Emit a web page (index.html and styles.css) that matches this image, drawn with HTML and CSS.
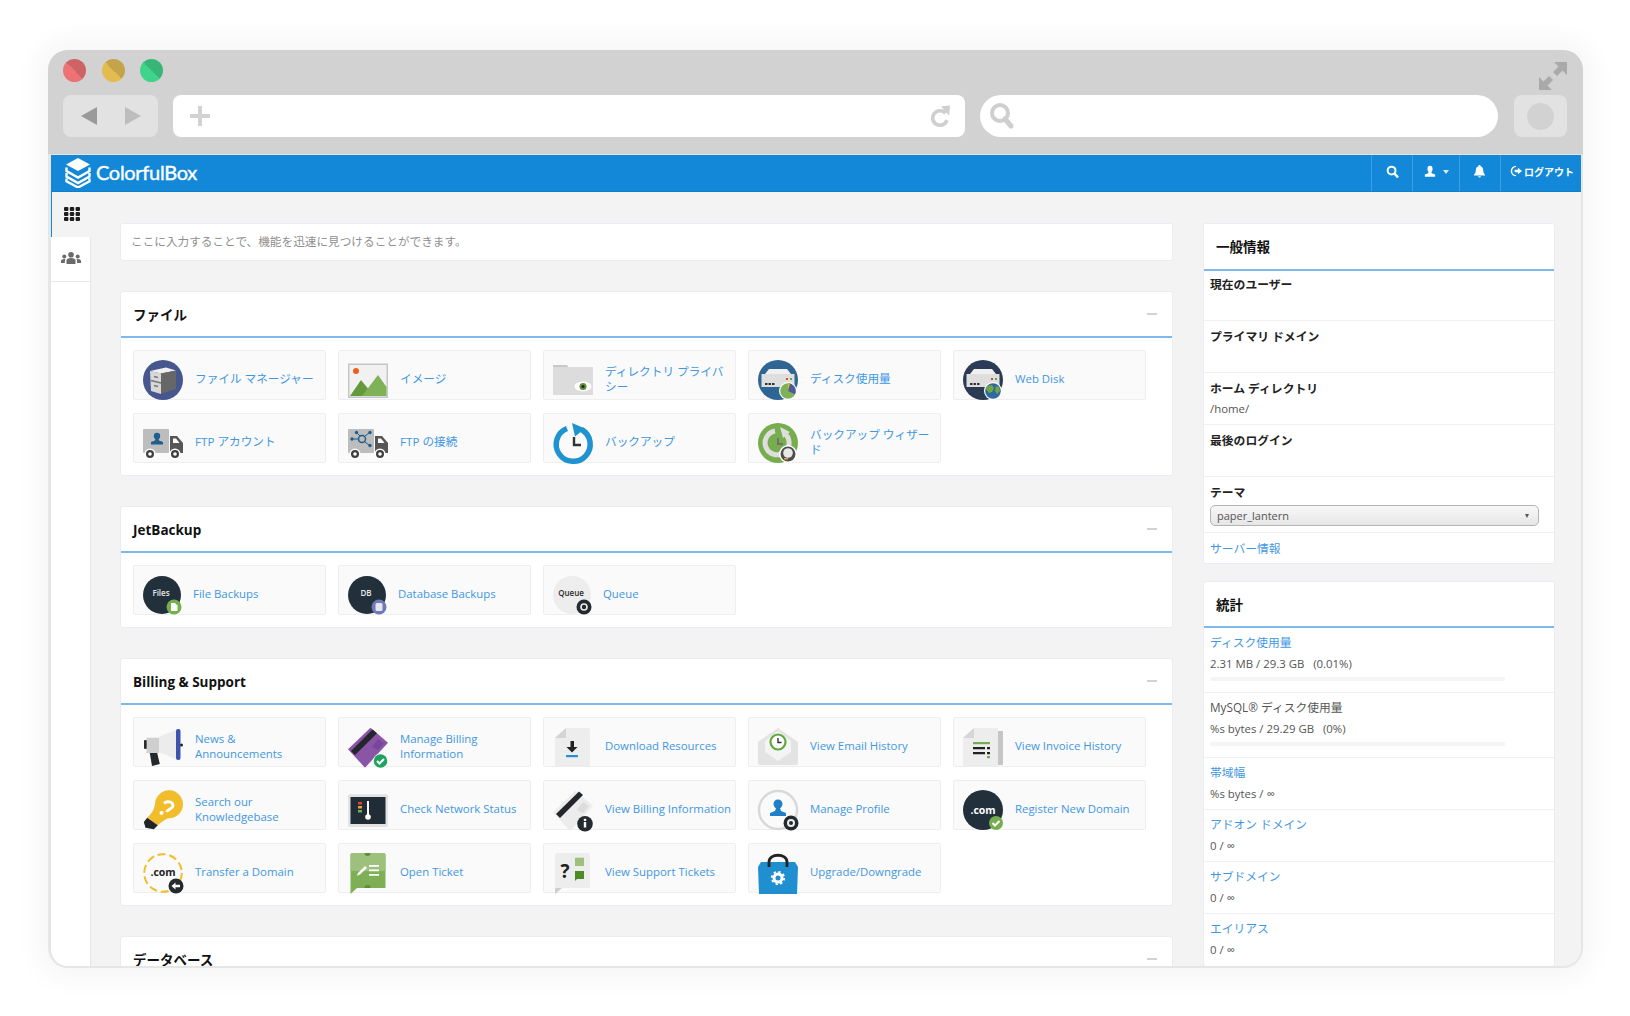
FILE: index.html
```html
<!DOCTYPE html>
<html lang="ja">
<head>
<meta charset="utf-8">
<title>ColorfulBox</title>
<link rel="stylesheet" href="styles.css">
</head>
<body>
<div class="window">
  <div class="chrome">
    <div class="chrome-top">
      <div class="lights"><span class="light red"></span><span class="light yellow"></span><span class="light green"></span></div>
      <svg class="expand" viewBox="0 0 28 28"><path fill="#a9a9a9" d="M28 0v13l-4.500-4.500-5.500 5.500-4-4 5.500-5.500L15 0zM0 28V15l4.500 4.500 5.500-5.500 4 4-5.500 5.500L13 28z"/></svg>
    </div>
    <div class="toolbar">
      <div class="navbox">
        <svg class="nav-arrow" viewBox="0 0 16 18"><path fill="#9a9a9a" d="M16 0v18L0 9z"/></svg>
        <svg class="nav-arrow" viewBox="0 0 16 18"><path fill="#bdbdbd" d="M0 0v18l16-9z"/></svg>
      </div>
      <div class="urlbar">
        <svg class="plus" viewBox="0 0 20 20"><path fill="#d2d2d2" d="M8 0h4v8h8v4h-8v8H8v-8H0V8h8z"/></svg>
        <svg class="reload" viewBox="0 0 22 24"><path fill="none" stroke="#cfcfcf" stroke-width="4" d="M16 8.500a8 8 0 1 0 1.500 7.500"/><path fill="#cfcfcf" d="M11 1l10-1-1 11z"/></svg>
      </div>
      <div class="searchbar">
        <svg class="magnify" viewBox="0 0 24 26"><circle cx="10" cy="10" r="8" fill="none" stroke="#cfcfcf" stroke-width="4"/><path stroke="#cfcfcf" stroke-width="5" stroke-linecap="round" d="M15 16l6 7"/></svg>
      </div>
      <div class="profilebox"><span class="profile-dot"></span></div>
    </div>
  </div>

  <div class="app">
    <header class="appbar">
      <div class="brand">
        <svg class="brand-mark" viewBox="0 0 26 30">
          <path fill="#fff" d="M13 0l12 6.500L13 13 1 6.500z"/>
          <path fill="none" stroke="#fff" stroke-width="2.400" d="M1.500 9.500v3.500L13 19.500 24.500 13V9.500M1.500 15v3.500L13 25 24.500 18.500V15M1.500 20.500v2.800L13 29.500l11.500-6.200v-2.800"/>
        </svg>
        <span class="brand-name">ColorfulBox</span>
      </div>
      <nav class="appnav">
        <a class="navcell cell-search"><svg class="navicon" viewBox="0 0 14 14"><circle cx="6" cy="6" r="4.200" fill="none" stroke="#fff" stroke-width="2.200"/><path stroke="#fff" stroke-width="2.600" d="M9 9l4 4.500"/></svg></a>
        <a class="navcell cell-user"><svg class="navicon user-glyph" viewBox="0 0 14 14"><ellipse cx="7" cy="4" rx="3" ry="3.600" fill="#fff"/><path fill="#fff" d="M5.500 6.500h3l.5 2.500 4 1.500V13H1v-2.500L5 9z"/></svg><span class="caret"></span></a>
        <a class="navcell cell-bell"><svg class="navicon" viewBox="0 0 14 14"><path fill="#fff" d="M7 0a1.200 1.200 0 0 1 1.200 1.300C10.500 2 11 4 11 6c0 2.500 1 3.500 2 4.500v.8H1v-.8c1-1 2-2 2-4.500 0-2 .5-4 2.800-4.700A1.200 1.200 0 0 1 7 0zM5.500 12h3a1.500 1.500 0 0 1-3 0z"/></svg></a>
        <a class="navcell cell-logout"><svg class="logout-icon" viewBox="0 0 13 13"><path fill="none" stroke="#fff" stroke-width="1.600" d="M6 1.500a5 5 0 1 0 0 10"/><path fill="#fff" d="M4.500 5.200h3.500V3L12.500 6.500 8 10V7.800H4.500z"/></svg>ログアウト</a>
      </nav>
    </header>

    <div class="workspace">
      <aside class="sidebar">
        <div class="tab tab-active">
          <svg class="grid-icon" viewBox="0 0 16 14"><g fill="#1d1d1d"><rect x="0" y="0" width="4.400" height="4" rx="1"/><rect x="5.800" y="0" width="4.400" height="4" rx="1"/><rect x="11.600" y="0" width="4.400" height="4" rx="1"/><rect x="0" y="5" width="4.400" height="4" rx="1"/><rect x="5.800" y="5" width="4.400" height="4" rx="1"/><rect x="11.600" y="5" width="4.400" height="4" rx="1"/><rect x="0" y="10" width="4.400" height="4" rx="1"/><rect x="5.800" y="10" width="4.400" height="4" rx="1"/><rect x="11.600" y="10" width="4.400" height="4" rx="1"/></g></svg>
        </div>
        <div class="tab tab-users">
          <svg class="users-icon" viewBox="0 0 20 12"><g fill="#6b6b6b"><circle cx="10" cy="2.800" r="2.800"/><path d="M5.500 12V8.500C5.500 7 7 6 10 6s4.500 1 4.500 2.500V12z"/><circle cx="3.300" cy="4.500" r="2"/><path d="M0 11V9c0-1.300 1.300-2 3.300-2 .5 0 .9 0 1.300.1-.5.500-.7 1-.7 1.500V11z"/><circle cx="16.700" cy="4.500" r="2"/><path d="M20 11V9c0-1.300-1.300-2-3.300-2-.5 0-.9 0-1.300.1.500.500.700 1 .700 1.500V11z"/></g></svg>
        </div>
      </aside>

      <main class="content">
        <div class="left-col">
          <div class="quickfind">ここに入力することで、機能を迅速に見つけることができます。</div>

          <section class="panel">
            <div class="panel-head"><h2>ファイル</h2><span class="collapse"></span></div>
            <div class="items">
              <a class="item"><svg class="ico" viewBox="0 0 40 40"><circle cx="20" cy="20" r="20" fill="#46578f"/><path fill="#f0f0f0" d="M7 11l16-3.500 10 3-15 3z"/><path fill="#d8d8d8" d="M7 11l11 2.500V34L8 31z"/><path fill="#676767" d="M18 13.500l15-3V29l-15 5z"/><path fill="none" stroke="#777" stroke-width="1.300" d="M8 20.500l10 2.500M11 16.500l4 1M11 25.500l4 1"/></svg><span class="label ja">ファイル マネージャー</span></a>

              <a class="item"><svg class="ico" viewBox="0 0 40 40"><rect y="3.500" width="40" height="34.500" fill="#c6c6c6"/><rect x="1.500" y="5" width="37" height="31.500" fill="#f1f1f1"/><circle cx="8" cy="11" r="3" fill="#ee5f1e"/><path fill="#659a3c" d="M2 36l11-16 9 11 4 5z"/><path fill="#7fb256" d="M14 36l16-21 8.500 12v9z"/></svg><span class="label ja">イメージ</span></a>

              <a class="item"><svg class="ico" viewBox="0 0 40 40"><path fill="#c9c9c9" d="M0 5h14l2 3h-16z"/><rect y="7" width="40" height="28" fill="#dcdcdc"/><ellipse cx="30" cy="26.500" rx="8.500" ry="5" fill="#fff"/><circle cx="30" cy="26.500" r="3.500" fill="#5f8f3a"/><circle cx="30" cy="26.500" r="1.500" fill="#222"/></svg><span class="label ja">ディレクトリ プライバシー</span></a>

              <a class="item"><svg class="ico" viewBox="0 0 40 40"><circle cx="20" cy="20" r="20" fill="#2f6592"/><path fill="#f0f0f0" d="M7 14l4-5h18l4 5z"/><path fill="#dedede" d="M3.500 14h33v13h-33z"/><path fill="#333" d="M7 23h2.500v2H7zM10.500 23H13v2h-2.500zM14 23h2.500v2H14z"/><path fill="#d9472f" d="M28 18h2v2h-2z"/><path fill="#5fa83c" d="M32 18h2v2h-2z"/><circle cx="30" cy="31" r="9" fill="#fff"/><circle cx="30" cy="31" r="7.800" fill="#7fb256"/><path fill="#4a5a9c" d="M30 23.200a7.800 7.800 0 0 1 7 11L30 31z"/><path fill="#f2b61e" d="M30 23.200a7.800 7.800 0 0 1 2 .3L30 31z"/></svg><span class="label ja">ディスク使用量</span></a>

              <a class="item"><svg class="ico" viewBox="0 0 40 40"><circle cx="20" cy="20" r="20" fill="#2b3a55"/><path fill="#f0f0f0" d="M7 14l4-5h18l4 5z"/><path fill="#dedede" d="M3.500 14h33v13h-33z"/><path fill="#333" d="M7 23h2.500v2H7zM10.500 23H13v2h-2.500zM14 23h2.500v2H14z"/><path fill="#d9472f" d="M28 18h2v2h-2z"/><path fill="#5fa83c" d="M32 18h2v2h-2z"/><circle cx="30" cy="31" r="9" fill="#fff"/><circle cx="30" cy="31" r="7.800" fill="#2f6a9e"/><path fill="#6fa843" d="M24 26l5-1 2 3-2 4-3 1-3-4zM33 26l3 1 1 4-3 3-2-3z"/></svg><span class="label">Web Disk</span></a>

              <a class="item"><svg class="ico" viewBox="0 0 40 40"><rect y="6" width="26" height="24" rx="1" fill="#bdbdbd"/><path fill="#565656" d="M27 13h7l6 7v10H27z"/><path fill="#fff" d="M30 15.500h3l3.500 4.500H30z"/><circle cx="7" cy="31" r="5.500" fill="#fff"/><circle cx="7" cy="31" r="4" fill="#3f3f3f"/><circle cx="7" cy="31" r="1.800" fill="#fff"/><circle cx="32" cy="31" r="5.500" fill="#fff"/><circle cx="32" cy="31" r="4" fill="#3f3f3f"/><circle cx="32" cy="31" r="1.800" fill="#fff"/><circle cx="14" cy="13" r="3.200" fill="#1f5e8e"/><path fill="#1f5e8e" d="M12.500 15.500h3l.5 2 4 1.500v2.500H8V19l4-1.500z"/></svg><span class="label ja">FTP アカウント</span></a>

              <a class="item"><svg class="ico" viewBox="0 0 40 40"><rect y="6" width="26" height="24" rx="1" fill="#bdbdbd"/><path fill="#565656" d="M27 13h7l6 7v10H27z"/><path fill="#fff" d="M30 15.500h3l3.500 4.500H30z"/><circle cx="7" cy="31" r="5.500" fill="#fff"/><circle cx="7" cy="31" r="4" fill="#3f3f3f"/><circle cx="7" cy="31" r="1.800" fill="#fff"/><circle cx="32" cy="31" r="5.500" fill="#fff"/><circle cx="32" cy="31" r="4" fill="#3f3f3f"/><circle cx="32" cy="31" r="1.800" fill="#fff"/><circle cx="14" cy="16" r="3.500" fill="none" stroke="#1f5e8e" stroke-width="1.500"/><path stroke="#1f5e8e" stroke-width="1" d="M5 16h5M17 13l4-3M17 19l4 3M12 13l-3-3"/><g fill="#1f5e8e"><circle cx="4" cy="16" r="1.700"/><circle cx="22" cy="9.500" r="1.700"/><circle cx="22" cy="22.500" r="1.700"/><circle cx="8.500" cy="9.500" r="1.700"/></g></svg><span class="label ja">FTP の接続</span></a>

              <a class="item"><svg class="ico" viewBox="0 0 40 40"><path fill="none" stroke="#1f93cf" stroke-width="5.500" d="M28.500 6.500A17 17 0 1 1 14 5.500"/><path fill="#1f93cf" d="M19 0l13 5.500-10 8z"/><path fill="none" stroke="#333" stroke-width="2.400" d="M21 14v8h7"/></svg><span class="label ja">バックアップ</span></a>

              <a class="item"><svg class="ico" viewBox="0 0 40 40"><circle cx="20" cy="20" r="20" fill="#78ad4f"/><path fill="none" stroke="#dedede" stroke-width="5" d="M26 10A12 12 0 1 1 17 8"/><path fill="#dedede" d="M22 4l10 5-7 6z"/><path fill="none" stroke="#6f6f6f" stroke-width="1.800" d="M20 15v6h5"/><circle cx="30" cy="31" r="9" fill="#fff"/><circle cx="30" cy="31" r="7.500" fill="#4e4e4e"/><circle cx="30" cy="30" r="4.800" fill="#e8e8e8"/><path fill="#e9a13b" d="M26 35h4v1.500h-4z"/></svg><span class="label ja">バックアップ ウィザード</span></a>
            </div>
          </section>

          <section class="panel">
            <div class="panel-head"><h2 class="head-latin">JetBackup</h2><span class="collapse"></span></div>
            <div class="items">
              <a class="item item-jb"><svg class="ico-jb" viewBox="0 0 39 40"><circle cx="19" cy="20" r="19" fill="#22303c"/><text x="18" y="21" class="ico-txt" fill="#e8e8e8">Files</text><circle cx="31" cy="32" r="7.500" fill="#74b04c"/><path fill="#fff" d="M28 28h4l2.500 2.500V36H28z"/></svg><span class="label">File Backups</span></a>
              <a class="item item-jb"><svg class="ico-jb" viewBox="0 0 39 40"><circle cx="19" cy="20" r="19" fill="#22303c"/><text x="18" y="21" class="ico-txt" fill="#e8e8e8">DB</text><circle cx="31" cy="32" r="7.500" fill="#6f7ab6"/><rect x="27.500" y="28" width="7" height="8" rx="1.500" fill="#e6e6f2"/></svg><span class="label">Database Backups</span></a>
              <a class="item item-jb"><svg class="ico-jb" viewBox="0 0 39 40"><circle cx="19" cy="20" r="19" fill="#ededed"/><text x="18" y="21" class="ico-txt" fill="#2b2b2b">Queue</text><circle cx="31" cy="32" r="7.500" fill="#232a30"/><circle cx="31" cy="32" r="3" fill="none" stroke="#eee" stroke-width="1.600"/></svg><span class="label">Queue</span></a>
            </div>
          </section>

          <section class="panel">
            <div class="panel-head"><h2 class="head-latin">Billing &amp; Support</h2><span class="collapse"></span></div>
            <div class="items">
              <a class="item"><svg class="ico" viewBox="0 0 40 40"><path fill="#ececec" d="M15.800 9.700L33 3v29l-17.200-7z"/><rect x="3.500" y="10.700" width="12.500" height="15.300" fill="#cfcfcf"/><rect x="1" y="13" width="2.700" height="9" rx="1" fill="#2a2a2a"/><path fill="#23282c" d="M6.800 26h7.400l2.600 11-7.800 2z"/><rect x="33" y="2" width="4.500" height="31" rx="2" fill="#3d53ac"/><circle cx="38.500" cy="18" r="1.500" fill="#222"/></svg><span class="label">News &amp; Announcements</span></a>

              <a class="item"><svg class="ico" viewBox="0 0 40 40"><path fill="#8b55a7" d="M22.500.7L40 15.700 17 40.700 0 22.300z"/><path fill="#23262a" d="M3 24L24.500 2.500 29 6.300 7 28z"/><path fill="#79479a" d="M24 20l6-8 6 4-6 7z"/><circle cx="32.500" cy="34" r="7.500" fill="#fff"/><circle cx="32.500" cy="34" r="6.800" fill="#1fa35f"/><path fill="none" stroke="#fff" stroke-width="2" d="M29 34l2.500 2.500 4.500-4.500"/></svg><span class="label">Manage Billing Information</span></a>

              <a class="item"><svg class="ico" viewBox="0 0 40 40"><path fill="#ededed" d="M2 11L13 1h22a2 2 0 0 1 2 2v37H2z"/><path fill="#d4d4d4" d="M2 11L13 1v10z"/><path fill="#222" d="M17.500 14h3.500v6h3.500L19 25.500 13.500 20H17.500z"/><rect x="13" y="28" width="12" height="2.200" fill="#1f93d8"/></svg><span class="label">Download Resources</span></a>

              <a class="item"><svg class="ico" viewBox="0 0 40 40"><path fill="#e3e3e3" d="M0 15L20 1l20 14v21a2 2 0 0 1-2 2H2a2 2 0 0 1-2-2z"/><path fill="#f4f4f4" d="M7 14L20 4l13 10v11l-13 9-13-9z"/><circle cx="20" cy="15" r="7.500" fill="#fff" stroke="#5fa83c" stroke-width="2.200"/><path fill="none" stroke="#333" stroke-width="1.400" d="M20 11v4.500h3.500"/></svg><span class="label">View Email History</span></a>

              <a class="item"><svg class="ico" viewBox="0 0 40 40"><rect x="35" y="4" width="5" height="34" fill="#c6c6c6"/><path fill="#ededed" d="M0 11L11 1h24v39H0z"/><path fill="#d6d6d6" d="M0 11L11 1v10z"/><rect x="10" y="15" width="17" height="2.200" fill="#78ad4f"/><path fill="#222" d="M10 20h12v2.300H10zM10 25h12v2.300H10zM24 20h3v2.300h-3zM24 25h3v2.300h-3z"/><rect x="24" y="29" width="3" height="2.200" fill="#78ad4f"/></svg><span class="label">View Invoice History</span></a>

              <a class="item"><svg class="ico" viewBox="0 0 40 40"><path fill="#f2bd2b" d="M4.200 27.700C9 23 11 20 12 14A14 14 0 1 1 25 28.300C22 30 18 32 14.800 35.300z"/><path fill="#1f2529" d="M4.200 27.700l10.600 7.600-4 4-8.300-1.600L.8 32z"/><path fill="none" stroke="#fff" stroke-width="2.800" d="M21 13.500c3-3 9-2 9 2 0 3.500-5 3-6.500 6.500"/><circle cx="18.500" cy="23" r="2" fill="#fff"/></svg><span class="label">Search our Knowledgebase</span></a>

              <a class="item"><svg class="ico" viewBox="0 0 40 40"><rect y="4.300" width="40" height="32.700" rx="2" fill="#e2e2e2"/><rect x="2.500" y="7" width="35" height="27" fill="#202c36"/><rect x="10" y="12" width="4" height="2.500" fill="#d9472f"/><rect x="10" y="16" width="4" height="2.500" fill="#e9a13b"/><rect x="10" y="20" width="4" height="2.500" fill="#78ad4f"/><rect x="19" y="11" width="2" height="15" fill="#fff"/><circle cx="20" cy="27" r="2.800" fill="#fff"/></svg><span class="label">Check Network Status</span></a>

              <a class="item"><svg class="ico" viewBox="0 0 40 40"><path fill="#ececec" d="M22.500.7L40 15.700 17 40.700 0 22.300z"/><path fill="#23262a" d="M3 24L26 1.500 30 5 7 28z"/><path fill="#dcdcdc" d="M24 20l6-8 6 4-6 7z"/><circle cx="32" cy="33.700" r="7.800" fill="#232a30"/><rect x="30.800" y="32" width="2.400" height="5.500" fill="#fff"/><rect x="30.800" y="28.800" width="2.400" height="2.200" fill="#fff"/></svg><span class="label">View Billing Information</span></a>

              <a class="item"><svg class="ico" viewBox="0 0 40 40"><circle cx="20" cy="20" r="19" fill="none" stroke="#d8d8d8" stroke-width="2.400"/><circle cx="20" cy="14" r="4.500" fill="#1f80c8"/><path fill="#1f80c8" d="M18 18h4l1 3 5 2v3H12v-3l5-2z"/><circle cx="33" cy="33" r="7.500" fill="#232a30"/><circle cx="33" cy="33" r="3" fill="none" stroke="#eee" stroke-width="2"/></svg><span class="label">Manage Profile</span></a>

              <a class="item"><svg class="ico" viewBox="0 0 40 40"><circle cx="20" cy="20" r="20" fill="#22303c"/><text x="20" y="23.500" class="ico-com" fill="#fff">.com</text><circle cx="33" cy="33" r="7" fill="#78ad4f"/><path fill="none" stroke="#fff" stroke-width="2" d="M29.500 33l2.500 2.500 4.500-4.500"/></svg><span class="label">Register New Domain</span></a>

              <a class="item"><svg class="ico" viewBox="0 0 40 40"><circle cx="20" cy="20" r="18.800" fill="none" stroke="#f0bd2d" stroke-width="2" stroke-dasharray="8 3.800"/><text x="20" y="23" class="ico-com" fill="#222">.com</text><circle cx="33" cy="33" r="7.500" fill="#232a30"/><path fill="#fff" d="M28.500 33l4-3.500v2.300H37v2.400h-4.500v2.300z"/></svg><span class="label">Transfer a Domain</span></a>

              <a class="item"><svg class="ico" viewBox="0 0 40 40"><path fill="#7eaf57" d="M2.500 2a2 2 0 0 1 2-2h31a2 2 0 0 1 2 2v33H9l-6.500 6z"/><path fill="#9dc17d" d="M4.500 0h31a2 2 0 0 1 2 2v16h-35V2a2 2 0 0 1 2-2z"/><path fill="#5d8f38" d="M16.500 0h6a3 3 0 0 1-6 0zM16.500 35h6a3 3 0 0 0-6 0z"/><path fill="#fff" d="M10 20l7-7 2 2-7 6.500-3 1.300z"/><path fill="#fff" d="M21 12h10v1.800H21zM21 16.500h10v1.800H21zM21 21h10v1.800H21z"/></svg><span class="label">Open Ticket</span></a>

              <a class="item"><svg class="ico" viewBox="0 0 40 40"><path fill="#ededed" d="M2 2a2 2 0 0 1 2-2h31a2 2 0 0 1 2 2v33H9l-7 6z"/><path fill="#cfcfcf" d="M2 41l7-6H2z"/><text x="12" y="25" class="ico-q" fill="#222">?</text><path fill="#9dc17d" d="M22 4.700h9V13h-9z"/><path fill="#4d8a28" d="M22 18h9v8h-7l-2 2z"/></svg><span class="label">View Support Tickets</span></a>

              <a class="item"><svg class="ico" viewBox="0 0 40 40"><path fill="#1f8fd0" d="M3 9h34l3 5-1 27H1L0 14z"/><path fill="none" stroke="#222" stroke-width="2.800" d="M11 14V9c0-9 18-9 18 0v5"/><circle cx="20" cy="25" r="4" fill="none" stroke="#fff" stroke-width="3"/><circle cx="20" cy="25" r="6.200" fill="none" stroke="#fff" stroke-width="1.800" stroke-dasharray="2.400 2.400"/></svg><span class="label">Upgrade/Downgrade</span></a>
            </div>
          </section>

          <section class="panel">
            <div class="panel-head"><h2>データベース</h2><span class="collapse"></span></div>
          </section>
        </div>

        <div class="right-col">
          <section class="panel side-panel">
            <div class="side-head side-head-first"><h2>一般情報</h2></div>
            <div class="row"><h3>現在のユーザー</h3></div>
            <div class="row"><h3>プライマリ ドメイン</h3></div>
            <div class="row"><h3>ホーム ディレクトリ</h3><p>/home/</p></div>
            <div class="row"><h3>最後のログイン</h3></div>
            <div class="row row-theme"><h3>テーマ</h3><div class="select"><span>paper_lantern</span><i class="select-caret"></i></div></div>
            <div class="row row-link"><a class="link">サーバー情報</a></div>
          </section>

          <section class="panel side-panel">
            <div class="side-head"><h2>統計</h2></div>
            <div class="row row-bar"><a class="link">ディスク使用量</a><p>2.31 MB / 29.3 GB &nbsp; (0.01%)</p><div class="progress"></div></div>
            <div class="row row-bar"><span class="plain">MySQL® ディスク使用量</span><p>%s bytes / 29.29 GB &nbsp; (0%)</p><div class="progress"></div></div>
            <div class="row row-stat"><a class="link">帯域幅</a><p>%s bytes / ∞</p></div>
            <div class="row row-stat"><a class="link">アドオン ドメイン</a><p>0 / ∞</p></div>
            <div class="row row-stat"><a class="link">サブドメイン</a><p>0 / ∞</p></div>
            <div class="row row-stat"><a class="link">エイリアス</a><p>0 / ∞</p></div>
          </section>
        </div>
      </main>
    </div>
  </div>
</div>
</body>
</html>
```

FILE: styles.css
```css
* { box-sizing: border-box; }
html, body { margin: 0; height: 100%; background: #fff; overflow: hidden; }
body {
  padding: 50px 47px 48px 48px;
  font-family: "Open Sans", "Noto Sans CJK JP", sans-serif;
  font-size: 12px;
  color: #444;
}
h2, h3, p { margin: 0; }

.window {
  height: 918px;
  background: #e6e6e6;
  border-radius: 20px;
  overflow: hidden;
  box-shadow: 0 0 26px 12px rgba(0, 0, 0, .035);
  display: flex;
  flex-direction: column;
}

/* browser frame */
.chrome {
  flex: none;
  height: 105px;
  padding: 0 16px 0 15px;
  background: #d2d2d2;
  border-bottom: 1px solid #e3e3e3;
}
.chrome-top {
  height: 45px;
  padding-top: 9px;
  display: flex;
  justify-content: space-between;
  align-items: flex-start;
}
.lights { display: flex; gap: 15.5px; }
.light { width: 23px; height: 23px; border-radius: 50%; }
.red { background: linear-gradient(45deg, #ec7273 50%, #cd6364 50%); }
.yellow { background: linear-gradient(45deg, #e3bb4e 50%, #c4a44a 50%); }
.green { background: linear-gradient(45deg, #3ed58b 50%, #38b677 50%); }
.expand { width: 28px; height: 28px; margin-top: 3px; }
.toolbar { display: flex; height: 42px; }
.navbox {
  width: 95px;
  background: #e2e2e2;
  border-radius: 8px;
  display: flex;
  align-items: center;
  justify-content: center;
  gap: 28px;
}
.nav-arrow { width: 16px; height: 18px; }
.urlbar {
  width: 792px;
  margin-left: 15px;
  background: #fff;
  border-radius: 8px;
  display: flex;
  align-items: center;
  justify-content: space-between;
  padding: 0 14px 0 17px;
}
.plus { width: 20px; height: 20px; }
.reload { width: 20px; height: 23px; }
.searchbar {
  width: 518px;
  margin-left: 15px;
  background: #fff;
  border-radius: 21px;
  display: flex;
  align-items: center;
  padding-left: 10px;
}
.magnify { width: 24px; height: 26px; }
.profilebox {
  width: 53px;
  margin-left: 16px;
  background: #e2e2e2;
  border-radius: 8px;
  display: flex;
  align-items: center;
  justify-content: center;
}
.profile-dot { width: 27px; height: 27px; border-radius: 50%; background: #d2d2d2; }

/* app */
.app {
  flex: 1;
  min-height: 0;
  margin: 0 2px 2px 3px;
  background: #f3f3f3;
  display: flex;
  flex-direction: column;
  border-radius: 0 0 17px 17px;
  overflow: hidden;
}
.appbar {
  flex: none;
  height: 37px;
  background: #1388d8;
  border-bottom: 1px solid #0f7ecb;
  display: flex;
  justify-content: space-between;
  color: #fff;
}
.brand { display: flex; align-items: center; padding-left: 14px; gap: 5px; }
.brand-mark { width: 26px; height: 30px; }
.brand-name {
  font-family: Lato, sans-serif;
  font-size: 20px;
  letter-spacing: -.3px;
  line-height: 20px;
  padding-bottom: 2px;
  -webkit-text-stroke: .4px #fff;
}
.appnav { display: flex; }
.navcell {
  height: 36px;
  border-left: 1px solid #3c9ee3;
  display: flex;
  align-items: center;
  justify-content: center;
  padding-bottom: 4px;
}
.cell-search { width: 41px; }
.cell-user { width: 47px; gap: 7px; }
.cell-bell { width: 41px; padding-right: 2px; }
.cell-logout { width: 81px; gap: 1px; font-size: 10px; font-weight: 700; justify-content: flex-start; padding-left: 9px; }
.navicon { width: 13px; height: 13px; }
.user-glyph { width: 12px; }
.logout-icon { width: 13px; height: 12px; }
.caret { width: 0; height: 0; border: 3.500px solid transparent; border-top: 4px solid #d8ecfa; border-bottom: 0; margin-top: 2px; }

.workspace { flex: 1; min-height: 0; display: flex; }
.sidebar {
  flex: none;
  width: 40px;
  background: #fff;
  border-right: 1px solid #e6e6e6;
}
.tab {
  height: 45px;
  display: flex;
  align-items: center;
  justify-content: center;
  border-bottom: 1px solid #e8e8e8;
}
.tab-active {
  width: 40px;
  background: #f3f3f3;
  border-left: 1px solid #1388d8;
  border-bottom: 0;
  padding-bottom: 2px;
}
.tab-users { padding: 0 0 3px 1px; }
.grid-icon { width: 16px; height: 14px; }
.users-icon { width: 20px; height: 12px; }

.content {
  flex: 1;
  min-width: 0;
  display: flex;
  gap: 30px;
  padding: 31px 0 0 29px;
  overflow: hidden;
}
.left-col { width: 1053px; flex: none; }
.right-col { width: 352px; flex: none; display: flex; flex-direction: column; gap: 17px; }

.quickfind {
  height: 38px;
  margin-bottom: 30px;
  padding: 0 10px 3px;
  background: #fff;
  border: 1px solid #e7edf2;
  border-radius: 3px;
  display: flex;
  align-items: center;
  color: #8f8f8f;
  font-size: 11.650px;
}

.panel {
  background: #fff;
  border: 1px solid #e7edf2;
  border-radius: 3px;
  margin-bottom: 30px;
}
.panel-head {
  height: 46px;
  padding: 0 15px 0 12px;
  border-bottom: 2px solid #7db9ec;
  display: flex;
  align-items: center;
  justify-content: space-between;
}
.panel-head h2, .side-head h2 {
  font-size: 13.500px;
  font-weight: 700;
  color: #111;
}
.panel-head .head-latin { padding-top: 2px; }
.collapse { width: 10px; height: 2px; background: #d2d2d2; }
.items {
  display: grid;
  grid-template-columns: repeat(5, 193px);
  gap: 13px 12px;
  padding: 12px 12px 12px;
}
.item {
  height: 50px;
  padding: 9px 4px 0 9px;
  background: #fafafa;
  border: 1px solid #eeeeee;
  border-radius: 2px;
  display: flex;
  align-items: center;
  gap: 12px;
}
.ico { flex: none; width: 40px; height: 40px; overflow: visible; }
.ico-jb { flex: none; width: 39px; height: 40px; margin-right: -1px; }
.label {
  color: #3f97e2;
  font-size: 11.400px;
  line-height: 15px;
  margin-bottom: 2px;
}
.label.ja { font-size: 11.650px; }
.ico-txt {
  font-family: "Open Sans", sans-serif;
  font-size: 8px;
  font-weight: 600;
  text-anchor: middle;
}
.ico-com {
  font-family: "Open Sans", sans-serif;
  font-size: 10.500px;
  font-weight: 700;
  text-anchor: middle;
}
.ico-q {
  font-family: "Open Sans", sans-serif;
  font-size: 19px;
  font-weight: 700;
  text-anchor: middle;
}

/* side */
.side-panel { margin: 0; }
.side-head {
  height: 46px;
  padding-left: 12px;
  border-bottom: 2px solid #7db9ec;
  display: flex;
  align-items: center;
}
.side-head-first { height: 47px; padding-bottom: 1px; }
.row {
  height: 52px;
  padding: 6px 6px 0;
  border-bottom: 1px solid #f0f0f0;
  font-size: 11.400px;
}
.side-head + .row { height: 50px; padding-top: 4px; }
.row h3 { font-size: 11.800px; line-height: 19px; font-weight: 700; color: #222; }
.row p { line-height: 21px; color: #555; }
.row:last-child { border-bottom: 0; }
.row-stat { padding-top: 5px; }
.row-stat p, .row-bar p { padding-top: 1px; }
.row-theme { height: 56px; }
.row-link { height: 30px; }
.row-bar { height: 65px; padding-top: 5px; }
.side-head + .row-bar { height: 65px; padding-top: 5px; }
.link, .plain { display: block; line-height: 19px; font-size: 11.750px; }
.link { color: #3f97e2; }
.plain { color: #555; }
.select {
  width: 329px;
  height: 21px;
  margin-top: 3px;
  padding: 0 9px 0 6px;
  border: 1px solid #b4b4b4;
  border-radius: 5px;
  background: linear-gradient(#f8f8f8, #e6e6e6);
  display: flex;
  align-items: center;
  justify-content: space-between;
  font-size: 11px;
  color: #555;
}
.select-caret { width: 0; height: 0; border: 2.500px solid transparent; border-top: 4px solid #555; border-bottom: 0; }
.progress { width: 295px; height: 4px; margin-top: 3px; background: #f4f4f4; border-radius: 2px; }
```
